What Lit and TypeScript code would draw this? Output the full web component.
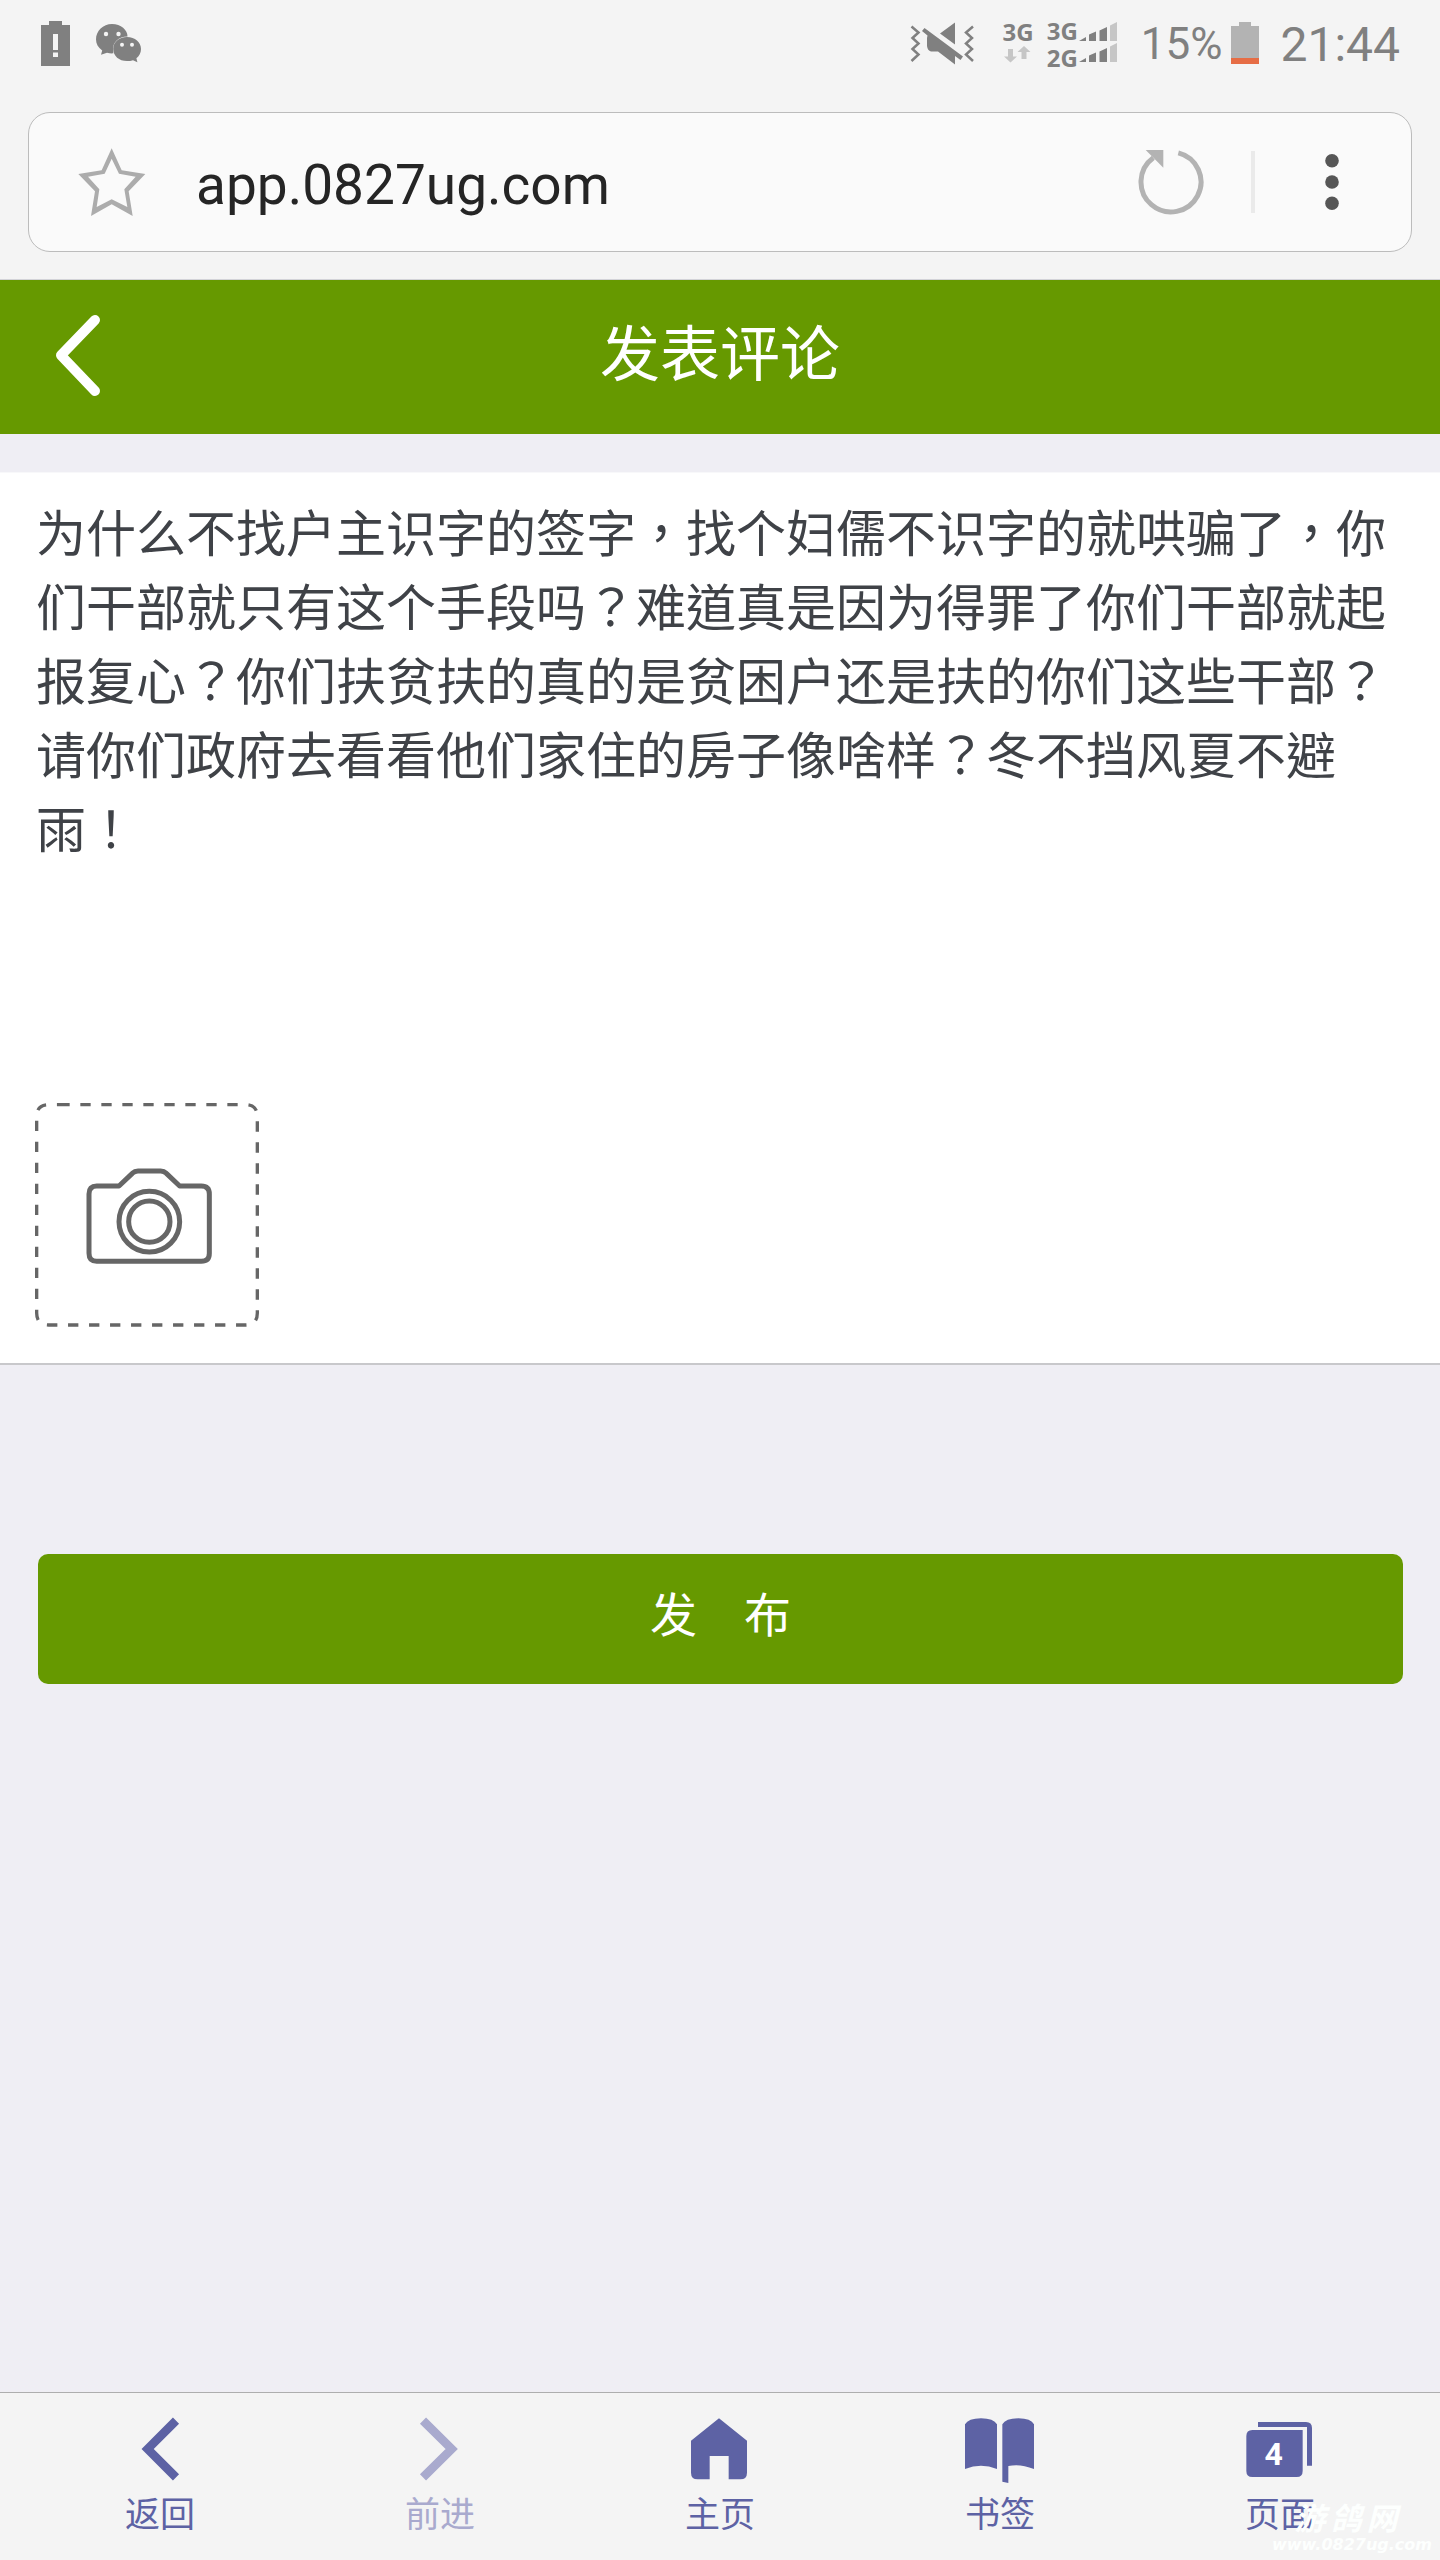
import { LitElement, html, css, svg } from "lit";
import { customElement, state } from "lit/decorators.js";

const sans = css`"Noto Sans CJK SC", sans-serif`;

@customElement("status-bar")
class StatusBar extends LitElement {
  static styles = css`
    :host {
      display: flex;
      align-items: center;
      height: 88px;
      padding: 0 40px;
      color: #808080;
      fill: #808080;
      font-family: Roboto, ${sans};
    }
    svg { display: block; flex: none; }
    .notices { display: flex; gap: 22px; margin-right: auto; }
    .system { display: flex; align-items: center; }
    .data { margin-left: 26px; }
    .data, .sims { font: 700 24px/27px "Noto Sans", sans-serif; }
    .data { line-height: 24px; }
    .sims { margin-left: 13px; }
    .percent { margin: 0 8px 0 23px; font-size: 44px; }
    .time { margin-left: 20px; font-size: 48px; }
    .faint { fill: #c6c6c6; }
  `;

  private bars(dy: number) {
    return svg`<g transform="translate(0 ${dy})">
      <path d="M197 41l7-4v4zM207 41v-6.500l7-3V41zM217.500 41V30.500l7.500-3.500V41z"/>
      <path class="faint" d="M228 41V25.500l7-3.500v19z"/>
    </g>`;
  }

  render() {
    return html`
      <div class="notices">
        <svg width="32" height="48" viewBox="40 20 32 48" aria-hidden="true">
          <path fill-rule="evenodd" d="M49 21h13v4h8v41H41V25h8zM53 34h5v16h-5zM53 52.500h5v4.500h-5z"/>
        </svg>
        <svg width="50" height="48" viewBox="94 20 50 48" aria-hidden="true">
          <path d="M112 24c9 0 15.500 6 15.500 12.500-9 0-15 6-14.500 13.500 0 1.500.3 2.500.5 3.300-2 .2-4.500 0-6.500-.6l-6 2 1.200-4.200C98 47.500 96 44 96 39.300 96 31 103 24 112 24z"/>
          <path d="M127 37c8 0 14 5.200 14 12 0 4-1.800 7-4.600 9.200l1 4-4.400-2c-1.700.6-3.800.9-6 .9-8 0-13.800-5.200-13.800-12.100S119 37 127 37z"/>
          <g fill="#f4f4f4">
            <circle cx="106" cy="34" r="2.200"/><circle cx="118.500" cy="34" r="2.200"/>
            <circle cx="122" cy="44.700" r="2"/><circle cx="132" cy="44.700" r="2"/>
          </g>
        </svg>
      </div>
      <div class="system">
        <svg width="68" height="48" viewBox="28 20 68 48" aria-hidden="true">
          <path d="M59 33.500L74 22.500v22zM43.500 28L82 56.500l-2.500 3.500-5.500-4v8.500L57 51.500h-7q-3.500-1-4-5.500V38l.5-2.500L41 31z"/>
          <path fill="none" stroke="#808080" stroke-width="2.500" d="M30.500 26.500l7 6-6 5.500 6 5.500-6 5.500 6 5.500-7 6.500M92 26.500l-7 6 6 5.500-6 5.500 6 5.500-6 5.500 7 6.500"/>
        </svg>
        <div class="data">
          3G
          <svg class="faint" width="30" height="24" viewBox="1002 44 30 24" aria-hidden="true">
            <path d="M1007 49h5v7.500h4l-6.500 6-6.500-6h4zM1020.500 59h5v-7h4l-6.500-6-6.500 6h4z"/>
          </svg>
        </div>
        <div class="sims"><div>3G</div><div>2G</div></div>
        <svg width="40" height="48" viewBox="196 20 40 48" aria-hidden="true">${this.bars(0)}${this.bars(21)}</svg>
        <span class="percent">15%</span>
        <svg width="30" height="48" viewBox="1230 20 30 48" aria-hidden="true">
          <path fill="#b3b3b3" d="M1239 22h12v4h8v32h-28V26h8z"/>
          <path fill="#e66d45" d="M1231 58h28v6h-28z"/>
        </svg>
        <span class="time">21:44</span>
      </div>
    `;
  }
}

@customElement("address-bar")
class AddressBar extends LitElement {
  static styles = css`
    :host { display: block; padding: 24px 28px 27px; border-bottom: 1px solid #d3d3d8; }
    .bar {
      display: flex;
      align-items: center;
      box-sizing: border-box;
      height: 140px;
      padding: 0 69px 0 49px;
      border: 1px solid #bcbcbc;
      border-radius: 22px;
      background: #fafafa;
    }
    button { flex: none; padding: 0; border: 0; background: none; }
    svg { display: block; }
    .url {
      flex: 1;
      min-width: 0;
      margin: 0 24px 0 50px;
      padding: 6px 0 0;
      border: 0;
      outline: 0;
      background: none;
      color: #252525;
      font: 400 55px/72px Roboto, ${sans};
    }
    .rule { flex: none; width: 4px; height: 62px; margin: 0 67px 0 46px; background: #eaeaea; }
  `;

  render() {
    return html`
      <div class="bar">
        <button aria-label="收藏">
          <svg width="68" height="68" viewBox="236 444 204 204">
            <path fill="#acacac" fill-rule="evenodd" d="M337 445L367 511 438 522 388 574 400 648 337 613 275 648 287 574 237 522 307 511zM337 476L316 521 266 530 300 568 292 621 337 598 384 621 375 568 409 530 359 521z"/>
          </svg>
        </button>
        <input class="url" type="text" aria-label="网址" .value=${"app.0827ug.com"} />
        <button aria-label="刷新">
          <svg width="68" height="68" viewBox="293 145 204 204">
            <path fill="none" stroke="#b3b3b3" stroke-width="15" d="M417 159.500A90 90 0 1 1 342 174"/>
            <path fill="#b3b3b3" d="M319 151h53v53z"/>
          </svg>
        </button>
        <span class="rule"></span>
        <button aria-label="更多">
          <svg width="20" height="68" viewBox="0 0 20 68" fill="#565656">
            <circle cx="10" cy="12.700" r="6.800"/><circle cx="10" cy="34" r="6.800"/><circle cx="10" cy="55.300" r="6.800"/>
          </svg>
        </button>
      </div>
    `;
  }
}

@customElement("comment-form")
class CommentForm extends LitElement {
  @state() private text =
    "为什么不找户主识字的签字，找个妇儒不识字的就哄骗了，你们干部就只有这个手段吗？难道真是因为得罪了你们干部就起报复心？你们扶贫扶的真的是贫困户还是扶的你们这些干部？请你们政府去看看他们家住的房子像啥样？冬不挡风夏不避雨！";

  static styles = css`
    :host { display: block; font-family: ${sans}; }
    .title-bar {
      display: grid;
      grid-template-columns: 1fr auto 1fr;
      align-items: center;
      height: 154px;
      padding: 0 52px;
      background: #669900;
      color: #fff;
    }
    .back { justify-self: start; padding: 0 0 2px; border: 0; background: none; }
    svg { display: block; }
    h1 { margin: 0; padding-bottom: 14px; font-size: 60px; font-weight: 400; line-height: 80px; }
    .panel {
      margin-top: 38px;
      padding-bottom: 36px;
      border-top: 1px solid #f8f8fa;
      border-bottom: 2px solid #c8c8cb;
      background: #fff;
    }
    textarea {
      display: block;
      box-sizing: border-box;
      width: 100%;
      height: 630px;
      padding: 20px 36px 0;
      border: 0;
      outline: 0;
      resize: none;
      overflow: hidden;
      background: none;
      color: #3f4247;
      font: 400 50px/74px "Noto Sans CJK TC", ${sans};
    }
    .photo { display: block; margin: 0 35px; padding: 0; border: 0; background: none; }
    .submit {
      display: block;
      width: calc(100% - 75px);
      height: 130px;
      margin: 189px 37px 0 38px;
      padding: 0 0 14px;
      border: 0;
      border-radius: 10px;
      background: #669900;
      color: #fff;
      font: 400 47px/70px ${sans};
      white-space: pre;
    }
  `;

  render() {
    return html`
      <header class="title-bar">
        <button class="back" aria-label="返回">
          <svg width="52" height="84" viewBox="156 132 156 252">
            <path fill="none" stroke="#fff" stroke-width="30" stroke-linecap="round" stroke-linejoin="round" d="M285 150L183 256 285 363"/>
          </svg>
        </button>
        <h1>发表评论</h1>
      </header>
      <section class="panel">
        <textarea
          aria-label="评论内容"
          spellcheck="false"
          .value=${this.text}
          @input=${(e: Event) => (this.text = (e.target as HTMLTextAreaElement).value)}
        ></textarea>
        <button class="photo" aria-label="添加照片">
          <svg width="224" height="224" viewBox="105 68 672 672" fill="none" stroke="#666">
            <path stroke-width="10" stroke-dasharray="31 32" d="M178 73H736Q772 73 772 109V698Q772 734 736 734H146Q110 734 110 698V109Q110 73 146 73H178"/>
            <g stroke-width="15">
              <path stroke-linejoin="round" d="M290 317H357L397 279Q404 272 414 272H482Q492 272 499 279L539 317H604Q628 317 628 341V519Q628 543 604 543H290Q267 543 267 519V341Q267 317 290 317z"/>
              <circle cx="448" cy="424" r="91"/>
              <circle cx="448" cy="424" r="62"/>
            </g>
          </svg>
        </button>
      </section>
      <button class="submit">发　布</button>
    `;
  }
}

@customElement("browser-nav")
class BrowserNav extends LitElement {
  static styles = css`
    :host { display: block; border-top: 1px solid #aeaeae; background: #f4f4f4; }
    nav { display: grid; grid-template-columns: repeat(5, 1fr); padding: 19px 20px 24px; }
    button {
      display: flex;
      flex-direction: column;
      align-items: center;
      gap: 3px;
      padding: 0;
      border: 0;
      background: none;
      color: #5d62a4;
      fill: #5d62a4;
      font: 400 35px/49px ${sans};
    }
    button:disabled { color: #a9aace; }
    .chevron { fill: none; stroke: currentColor; stroke-width: 26; }
    .count { fill: #fff; font: 700 96px Roboto, sans-serif; text-anchor: middle; }
  `;

  private items = [
    { label: "返回", box: "180 96 240 216", icon: svg`<path class="chevron" d="M348 122L263 207 348 292"/>` },
    { label: "前进", box: "1020 96 240 216", off: true, icon: svg`<path class="chevron" d="M1089 122L1175 207 1089 292"/>` },
    { label: "主页", box: "180 96 240 216", icon: svg`<path d="M297 115L381 182V278Q381 298 361 298H326V228H269V298H233Q213 298 213 278V182z"/>` },
    {
      label: "书签",
      box: "1020 96 240 216",
      icon: svg`<path d="M1035 133Q1045 115 1083 115T1131 133V267Q1083 247 1035 267zM1147 133Q1157 115 1195 115T1242 133V267Q1200 250 1165 258V309L1147 305z"/>`,
    },
    {
      label: "页面",
      box: "180 96 240 216",
      icon: svg`<path d="M217 150H368V273Q368 291 350 291H217Q199 291 199 273V168Q199 150 217 150zM234 126H378Q396 126 396 144V257H381V141H234z"/><text class="count" x="281" y="256">4</text>`,
    },
  ];

  render() {
    return html`<nav>
      ${this.items.map(
        (i) => html`<button ?disabled=${i.off}>
          <svg width="80" height="72" viewBox=${i.box} aria-hidden="true">${i.icon}</svg>
          <span>${i.label}</span>
        </button>`,
      )}
    </nav>`;
  }
}

@customElement("app-root")
class AppRoot extends LitElement {
  static styles = css`
    :host {
      position: relative;
      display: flex;
      flex-direction: column;
      min-height: 100vh;
      background: #efeef4;
    }
    .chrome { background: #f4f4f4; }
    main { flex: 1; }
    .watermark {
      position: absolute;
      right: 8px;
      bottom: 5px;
      color: #fdfffe;
      font: italic 700 16px/20px "DejaVu Sans", sans-serif;
      pointer-events: none;
    }
    .mark {
      display: flex;
      justify-content: center;
      gap: 5px;
      padding-right: 12px;
      font: italic 700 31px/36px ${sans};
    }
  `;

  render() {
    return html`
      <div class="chrome">
        <status-bar></status-bar>
        <address-bar></address-bar>
      </div>
      <main><comment-form></comment-form></main>
      <browser-nav></browser-nav>
      <div class="watermark">
        <div class="mark"><span>游</span><span>鸽</span><span>网</span></div>
        www.0827ug.com
      </div>
    `;
  }
}
